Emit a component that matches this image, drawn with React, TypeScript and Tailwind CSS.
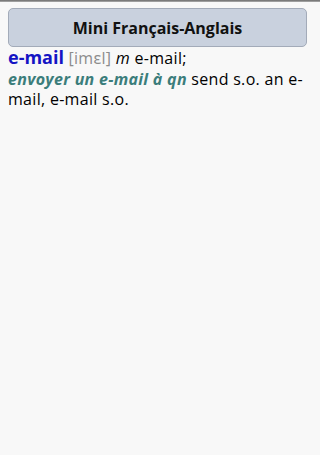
export default function App() {
  return (
    <div className="min-h-[455px] w-[320px] bg-[#f8f8f8] font-['Open_Sans','Noto_Sans',sans-serif]">
      <div className="h-[2px] bg-gradient-to-b from-[#6a6a6a] to-[#b0b0b0]" />
      <div className="px-[8px] pt-[6px] pr-[13px]">
        <div className="flex h-[39px] items-center justify-center rounded-[5px] border border-[#a3abb9] bg-[#c9d1de] text-[16px] font-bold text-[#111]">
          Mini Français-Anglais
        </div>
        <p className="pt-[0px] text-[16px] leading-[20.5px] tracking-[0.3px] text-black">
          <span className="text-[18px] font-bold tracking-normal text-[#1414c4]">e-mail</span>{" "}
          <span className="text-[#8c8c8c]">[imɛl]</span> <i>m</i> e-mail;
          <br />
          <span className="font-bold italic text-[#3b7d7b]">envoyer un e-mail à qn</span> send s.o. an
          e-mail, e-mail s.o.
        </p>
      </div>
    </div>
  );
}
